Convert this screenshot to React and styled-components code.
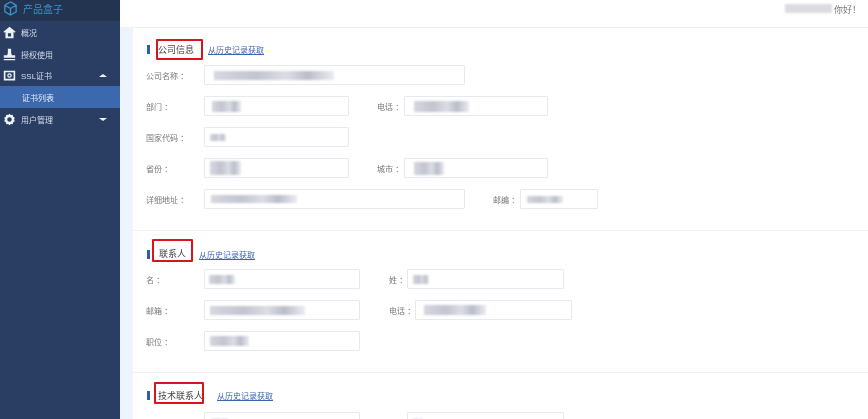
import React from "react";
import styled, { createGlobalStyle } from "styled-components";

const Global = createGlobalStyle`
  html, body { margin: 0; padding: 0; height: 419px; overflow: hidden; background: #fff; }
  #root { height: 419px; }
  * { box-sizing: border-box; }
`;
const FONT = `"Liberation Sans", "Noto Sans CJK SC", sans-serif`;

const Page = styled.div`
  display: flex; width: 868px; height: 419px; overflow: hidden; font-family: ${FONT};
  filter: blur(0.4px);
`;
const Sidebar = styled.aside`
  width: 120px; flex: none; background: #293e62; color: #dfe6f2; font-size: 8px;
`;
const Brand = styled.div`
  height: 21px; background: #22344f; display: flex; align-items: center; gap: 5px; padding: 0 0 5px 3px;
  color: #3f8fc9; font-size: 10px; overflow: hidden;
`;
const NavItem = styled.div`
  height: ${p => p.$h || 22}px; display: flex; align-items: center; padding: 0 13px 0 ${p => (p.$sub ? 22 : 3)}px;
  background: ${p => (p.$active ? "#3c68ad" : "transparent")};
  color: ${p => (p.$active ? "#e6edf8" : "#d5dded")};
`;
const NavIcon = styled.svg`
  width: 13px; height: 13px; margin-right: 5px; flex: none; fill: #eef2f8;
`;
const NavText = styled.span`flex: 1;`;
const Caret = styled.span`
  width: 0; height: 0; border-left: 4px solid transparent; border-right: 4px solid transparent;
  ${p => (p.$up ? "border-bottom: 3px solid #eef2f8;" : "border-top: 3px solid #eef2f8;")}
`;
const Main = styled.main`
  flex: 1; display: flex; flex-direction: column; min-width: 0; background: #fff; overflow: hidden;
`;
const TopBar = styled.header`
  height: 28px; flex: none; display: flex; align-items: flex-start; justify-content: flex-end; gap: 2px;
  padding: 3px 7px 0 0; border-bottom: 1px solid #eef0f5; font-size: 9px; color: #777; background: #fff;
`;
const Body = styled.div`
  flex: 1; border-left: 13px solid #eef4fc;
`;
const Section = styled.section`
  height: ${p => p.$h}px; padding: ${p => p.$top}px 0 0 13px;
  border-bottom: ${p => (p.$last ? "none" : "1px solid #f1f3f7")};
`;
const Heading = styled.div`
  display: flex; align-items: center; height: ${p => p.$h}px; font-size: 9px; color: #444;
`;
const Marker = styled.i`
  width: 3px; height: 9px; margin-left: 1px; background: #2f5fa8; flex: none;
`;
const TitleBox = styled.span`
  width: ${p => p.$w}px; height: ${p => p.$bh}px; margin-left: ${p => p.$ml}px; flex: none; align-self: flex-start;
  display: flex; align-items: center; white-space: nowrap;
  padding: ${p => p.$pt || 0}px 0 0 ${p => p.$pl}px;
  border: 2px solid #d8141c; border-radius: 1px;
`;
const HistoryLink = styled.a`
  margin-left: ${p => p.$ml}px; font-size: 8px; color: #3a66ad; text-decoration: underline; white-space: nowrap;
`;
const Rows = styled.div`
  display: flex; flex-direction: column; gap: 11px; margin-top: ${p => p.$mt}px;
`;
const Row = styled.div`
  display: flex; align-items: center; height: 20px;
`;
const Label = styled.label`
  width: ${p => p.$w}px; margin-left: ${p => p.$ml || 0}px; flex: none; font-size: 8px; color: #777; white-space: nowrap;
`;
const Field = styled.div`
  width: ${p => p.$w}px; height: 20px; flex: none; display: flex; align-items: center; overflow: hidden;
  border: 1px solid #e6e9f0; border-radius: 1px; background: #fff; padding-left: ${p => p.$pad ?? 6}px;
`;
const Smudge = styled.span`
  display: block; width: ${p => p.$w}px; height: ${p => p.$h || 8}px; flex: none; filter: blur(1px);
  background: linear-gradient(90deg, #d6d7df, #c2c4d0 35%, #dcdde4 60%, #babdca 78%, #ecedf1);
`;
const TopSmudge = styled(Smudge)`margin-top: 1px; background: #dcdce0;`;

const Home = () => <NavIcon viewBox="0 0 16 16"><path d="M8 1 0.5 7.2l1 1.2L3 7.2V15h10V7.2l1.5 1.2 1-1.2zM6 13V9h4v4z" /></NavIcon>;
const Stamp = () => <NavIcon viewBox="0 0 16 16"><path d="M6 1h4v5l1 3h4v3H1V9h4l1-3zM1 13.5h14V15H1z" /></NavIcon>;
const Cert = () => <NavIcon viewBox="0 0 16 16"><path fillRule="evenodd" d="M1 2h14v12H1zm2 2v8h10V4zm5 1.2a2.8 2.8 0 1 1 0 5.6 2.8 2.8 0 0 1 0-5.6zm0 1.5a1.3 1.3 0 1 0 0 2.6 1.3 1.3 0 0 0 0-2.6z" /></NavIcon>;
const Gear = () => <NavIcon viewBox="0 0 16 16"><path fillRule="evenodd" d="M8 1l1.6 1.6 2.3-.3.6 2.2 2 1.2L13.6 8l.9 2.3-2 1.2-.6 2.2-2.3-.3L8 15l-1.6-1.6-2.3.3-.6-2.2-2-1.2L2.4 8l-.9-2.3 2-1.2.6-2.2 2.3.3zm0 4.2a2.8 2.8 0 1 0 0 5.6 2.8 2.8 0 0 0 0-5.6z" /></NavIcon>;
const Cube = () => (
  <svg width="15" height="15" viewBox="0 0 16 16" fill="none" stroke="#3f8fc9" strokeWidth="1.4" style={{ flex: "none" }}>
    <path d="M8 1l6 3.5v7L8 15l-6-3.5v-7zM2 4.5 8 8l6-3.5M8 8v7" />
  </svg>
);

const Form = ({ label, w, sw, sh = 8, second, pad }) => (
  <Row>
    <Label $w={58}>{label}</Label>
    <Field $w={w} $pad={pad}>{sw ? <Smudge $w={sw} $h={sh} /> : null}</Field>
    {second ? (
      <>
        <Label $w={second.lw} $ml={second.ml}>{second.label}</Label>
        <Field $w={second.w} $pad={second.pad}><Smudge $w={second.sw} $h={second.sh || 8} /></Field>
      </>
    ) : null}
  </Row>
);

export default function App() {
  return (
    <Page>
      <Global />
      <Sidebar>
        <Brand><Cube /><span>产品盒子</span></Brand>
        <NavItem><Home /><NavText>概况</NavText></NavItem>
        <NavItem><Stamp /><NavText>授权使用</NavText></NavItem>
        <NavItem $h={21}><Cert /><NavText>SSL证书</NavText><Caret $up /></NavItem>
        <NavItem $sub $active $h={22}><NavText>证书列表</NavText></NavItem>
        <NavItem><Gear /><NavText>用户管理</NavText><Caret /></NavItem>
      </Sidebar>
      <Main>
        <TopBar>
          <TopSmudge $w={47} $h={9} />
          <span>你好！</span>
        </TopBar>
        <Body>
          <Section $h={203} $top={11}>
            <Heading $h={21}>
              <Marker />
              <TitleBox $w={47} $bh={21} $ml={6} $pl={0}>公司信息</TitleBox>
              <HistoryLink $ml={5}>从历史记录获取</HistoryLink>
            </Heading>
            <Rows $mt={5}>
              <Form label="公司名称 ：" w={261} sw={120} pad={9} sh={9} />
              <Form label="部门 ：" w={145} sw={29} sh={11} pad={7}
                second={{ label: "电话 ：", lw: 27, ml: 28, w: 144, sw: 55, sh: 11, pad: 9 }} />
              <Form label="国家代码 ：" w={145} sw={16} sh={7} pad={5} />
              <Form label="省份 ：" w={145} sw={31} sh={14} pad={5}
                second={{ label: "城市 ：", lw: 27, ml: 28, w: 144, sw: 30, sh: 13, pad: 9 }} />
              <Form label="详细地址 ：" w={261} sw={86} sh={8}
                second={{ label: "邮编 ：", lw: 27, ml: 28, w: 78, sw: 36, sh: 7 }} />
            </Rows>
          </Section>
          <Section $h={142} $top={8}>
            <Heading $h={30}>
              <Marker />
              <TitleBox $w={41} $bh={23} $ml={2} $pt={6} $pl={5}>联系人</TitleBox>
              <HistoryLink $ml={6}>从历史记录获取</HistoryLink>
            </Heading>
            <Rows $mt={0}>
              <Form label="名 ：" w={156} sw={26} sh={9} pad={4}
                second={{ label: "姓 ：", lw: 18, ml: 29, w: 157, sw: 16, sh: 9, pad: 5 }} />
              <Form label="邮箱 ：" w={156} sw={95} sh={9} pad={5}
                second={{ label: "电话 ：", lw: 26, ml: 29, w: 157, sw: 62, sh: 10, pad: 8 }} />
              <Form label="职位 ：" w={156} sw={39} sh={10} pad={5} />
            </Rows>
          </Section>
          <Section $last $h={60} $top={9}>
            <Heading $h={26}>
              <Marker />
              <TitleBox $w={50} $bh={22} $ml={4} $pt={4} $pl={2}>技术联系人</TitleBox>
              <HistoryLink $ml={13}>从历史记录获取</HistoryLink>
            </Heading>
            <Rows $mt={4}>
              <Form label="名 ：" w={156} sw={18} sh={7}
                second={{ label: "姓 ：", lw: 18, ml: 29, w: 157, sw: 10, sh: 7, pad: 5 }} />
            </Rows>
          </Section>
        </Body>
      </Main>
    </Page>
  );
}
